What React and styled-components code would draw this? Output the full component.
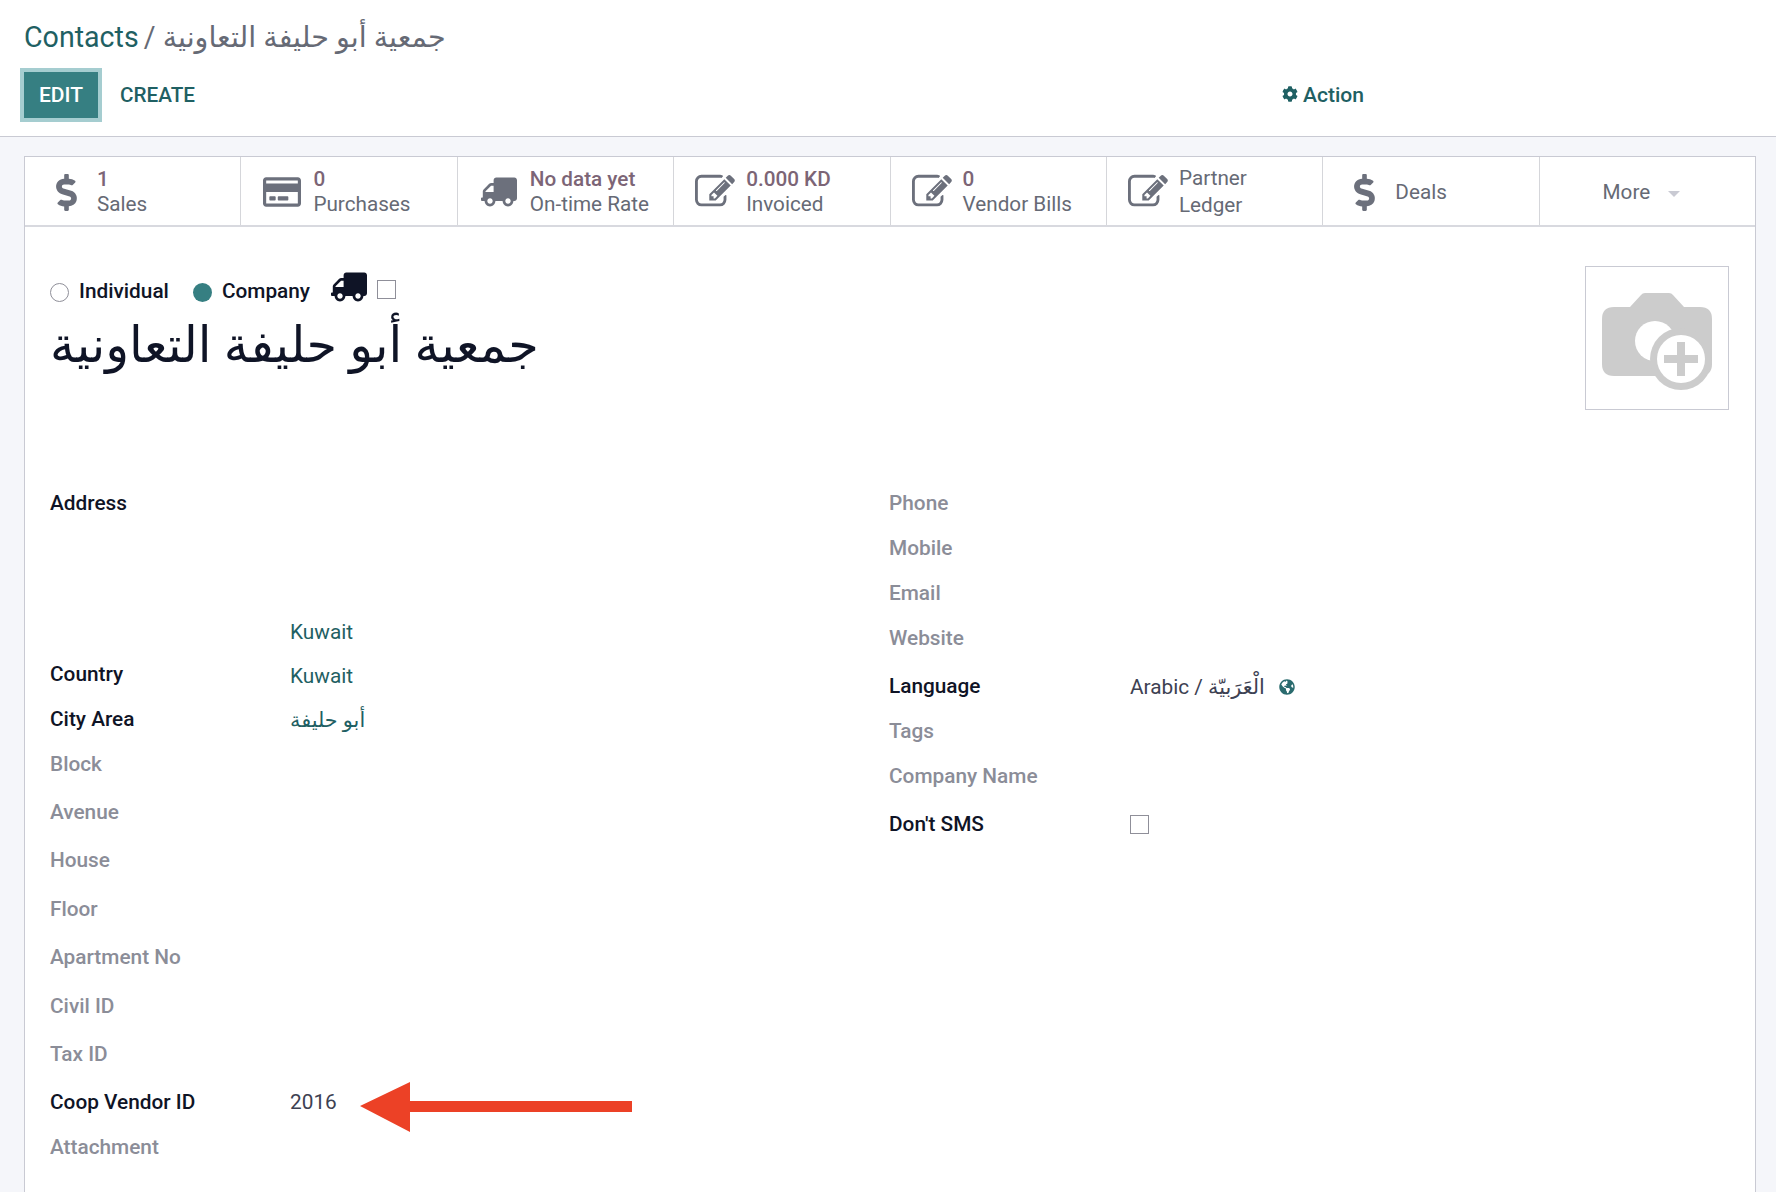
import React from "react";
import styled, { createGlobalStyle } from "styled-components";
import { FaCog, FaDollarSign, FaRegCreditCard, FaTruck, FaGlobeAmericas } from "react-icons/fa";

const Global = createGlobalStyle`
  html, body { margin: 0; padding: 0; height: 100%; overflow: hidden; background: #f5f6fa; }
  body { font-family: Roboto, "DejaVu Sans", sans-serif; color: #0f1426; }
`;

const Page = styled.div`
  position: relative;
  width: 1776px;
  height: 1192px;
  overflow: hidden;
`;

const ControlPanel = styled.header`
  height: 137px;
  box-sizing: border-box;
  background: #fff;
  border-bottom: 1px solid #c9cad3;
  padding: 18px 20px 0;
`;

const Breadcrumb = styled.div`
  font-size: 28.6px;
  line-height: 38px;
  padding-left: 4px;
  color: #666a75;
  white-space: nowrap;
`;

const CrumbLink = styled.span`
  color: #1f6063;
  margin-right: -2px;
`;

const Toolbar = styled.div`
  display: flex;
  align-items: center;
  margin-top: 12px;
  height: 54px;
`;

const EditButton = styled.button`
  width: 82px;
  height: 54px;
  box-sizing: border-box;
  background: #367f82;
  border: 4px solid #a5cdd0;
  color: #fff;
  font: 500 21px Roboto, sans-serif;
  padding: 0;
`;

const TextButton = styled.span`
  margin-left: 18px;
  font-size: 20.7px;
  font-weight: 500;
  color: #1f6063;
`;

const ActionMenu = styled.span`
  display: flex;
  align-items: center;
  gap: 5px;
  margin-left: 1087px;
  margin-top: -2px;
  font-size: 21.1px;
  font-weight: 500;
  color: #1f6063;
`;

const Sheet = styled.main`
  margin: 19px 20px 0 24px;
  height: 1100px;
  background: #fff;
  border: 1px solid #c9cad3;
  border-bottom: 0;
  box-sizing: border-box;
`;

const StatBar = styled.div`
  display: flex;
  height: 70px;
  box-sizing: border-box;
  border-bottom: 2px solid #d8d9df;
`;

const StatButton = styled.div`
  flex: ${p => (p.$last ? "1" : "0 0 216.4px")};
  box-sizing: border-box;
  display: flex;
  align-items: center;
  justify-content: ${p => (p.$last ? "center" : "flex-start")};
  padding-top: 2px;
  padding-right: ${p => (p.$last ? "12px" : "0")};
  border-right: ${p => (p.$last ? "0" : "1px solid #d5d6da")};
  color: #666a75;
  font-size: 20.7px;
  line-height: 25px;
`;

const StatIcon = styled.span`
  flex: 0 0 72px;
  box-sizing: border-box;
  display: flex;
  justify-content: center;
  padding-left: 10px;
  color: #6c707c;
  svg { display: block; }
`;

const StatText = styled.div`
  display: flex;
  flex-direction: column;
  white-space: nowrap;
`;

const StatLine = styled.span`
  line-height: 27px;
`;

const StatValue = styled.span`
  color: #7c6576;
  font-weight: 500;
`;

const Caret = styled.span`
  width: 0;
  height: 0;
  margin-left: 18px;
  margin-top: 3px;
  border-left: 6px solid transparent;
  border-right: 6px solid transparent;
  border-top: 6px solid #c9cad3;
`;

const SheetBody = styled.div`
  padding: 39px 26px 0 25px;
`;

const TitleBlock = styled.div`
  display: flex;
  justify-content: space-between;
  align-items: flex-start;
`;

const TitleLeft = styled.div`
  padding-top: 7px;
`;

const TypeRow = styled.div`
  display: flex;
  align-items: center;
  height: 36px;
  font-size: 20.8px;
  font-weight: 500;
`;

const Radio = styled.span`
  width: 19px;
  height: 19px;
  box-sizing: border-box;
  border-radius: 50%;
  margin-right: 10px;
  margin-top: 2px;
  border: ${p => (p.$on ? "0" : "1px solid #8f8f99")};
  background: ${p => (p.$on ? "#367f82" : "#fff")};
`;

const TypeLabel = styled.span`
  margin-right: ${p => p.$gap}px;
`;

const Check = styled.span`
  display: block;
  width: 19px;
  height: 19px;
  box-sizing: border-box;
  border: 1px solid #8f8f99;
  background: #fff;
  margin-top: ${p => (p.$lift ? "-4px" : "0")};
`;

const TruckMark = styled.span`
  display: flex;
  margin-right: 10px;
  margin-top: -8px;
  transform: scaleX(-1);
`;

const Title = styled.h1`
  margin: 6px 0 0;
  font-size: 49.4px;
  font-weight: 400;
  line-height: 60px;
  color: #0f1426;
`;

const ImageBox = styled.div`
  width: 144px;
  height: 144px;
  box-sizing: border-box;
  border: 1px solid #c9cad3;
  display: flex;
  align-items: center;
  justify-content: center;
  padding-top: 7px;
`;

const Groups = styled.div`
  display: grid;
  grid-template-columns: 839px 1fr;
  margin-top: 80px;
`;

const Group = styled.div`
  display: flex;
  flex-direction: column;
  --label-width: ${p => p.$labelWidth}px;
`;

const Row = styled.div`
  display: grid;
  grid-template-columns: var(--label-width) 1fr;
  grid-template-rows: 26px;
  align-items: center;
  height: 26px;
  margin-top: ${p => p.$gap || 0}px;
  font-size: 20.8px;
`;

const Label = styled.span`
  font-weight: 500;
  color: ${p => (p.$muted ? "#8b8d98" : "#0f1426")};
  white-space: nowrap;
`;

const Value = styled.span`
  color: ${p => (p.$link ? "#1f6063" : "#3d4152")};
  display: flex;
  align-items: center;
  white-space: nowrap;
  margin-top: ${p => p.$nudge || 0}px;
`;

const Globe = styled.span`
  display: flex;
  margin-left: 14px;
  color: #2a6b6e;
`;

const Arrow = styled.svg`
  position: absolute;
  left: 360px;
  top: 1082px;
`;

const PencilSquare = ({ size }) => (
  <svg width={size} height={size} viewBox="0 0 1792 1792" fill="currentColor">
    <path d="M888 1184l116-116-152-152-116 116v56h96v96h56zm440-720q-16-16-33 1l-350 350q-17 17-1 33t33-1l350-350q17-17 1-33zm80 594v190q0 119-84.500 203.500t-203.500 84.500h-832q-119 0-203.500-84.500t-84.500-203.500v-832q0-119 84.500-203.500t203.500-84.500h832q63 0 117 25 15 7 18 23 3 17-9 29l-49 49q-14 14-32 8-23-6-45-6h-832q-66 0-113 47t-47 113v832q0 66 47 113t113 47h832q66 0 113-47t47-113v-126q0-13 9-22l64-64q15-15 35-7t20 29zm-96-738l288 288-672 672h-288v-288zm444 132l-92 92-288-288 92-92q28-28 68-28t68 28l152 152q28 28 28 68t-28 68z" />
  </svg>
);

const stats = [
  { icon: <FaDollarSign size={37} />, value: "1", label: "Sales" },
  { icon: <FaRegCreditCard size={38} />, value: "0", label: "Purchases" },
  { icon: <FaTruck size={36} style={{ transform: "scaleX(-1)" }} />, value: "No data yet", label: "On-time Rate" },
  { icon: <PencilSquare size={40} />, value: "0.000 KD", label: "Invoiced" },
  { icon: <PencilSquare size={40} />, value: "0", label: "Vendor Bills" },
  { icon: <PencilSquare size={40} />, lines: ["Partner", "Ledger"] },
  { icon: <FaDollarSign size={37} />, lines: ["Deals"] },
];

const leftRows = [
  { label: "Address", strong: true, pitch: 0 },
  { value: "Kuwait", link: true, pitch: 129 },
  { label: "Country", strong: true, value: "Kuwait", link: true, nudge: 4, pitch: 42 },
  { label: "City Area", strong: true, value: "أبو حليفة", link: true, nudge: 2, pitch: 45 },
  { label: "Block", pitch: 45 },
  { label: "Avenue", pitch: 48 },
  { label: "House", pitch: 48 },
  { label: "Floor", pitch: 49 },
  { label: "Apartment No", pitch: 48 },
  { label: "Civil ID", pitch: 49 },
  { label: "Tax ID", pitch: 48 },
  { label: "Coop Vendor ID", strong: true, value: "2016", pitch: 48 },
  { label: "Attachment", pitch: 45 },
];

const rightRows = [
  { label: "Phone", pitch: 0 },
  { label: "Mobile", pitch: 45 },
  { label: "Email", pitch: 45 },
  { label: "Website", pitch: 45 },
  { label: "Language", strong: true, lang: true, nudge: 2, pitch: 48 },
  { label: "Tags", pitch: 45 },
  { label: "Company Name", pitch: 45 },
  { label: "Don't SMS", strong: true, check: true, pitch: 48 },
];

function renderRow(r, i) {
  return (
    <Row key={i} $gap={r.pitch ? r.pitch - 26 : 0}>
      <Label $muted={!r.strong}>{r.label}</Label>
      {r.lang ? (
        <Value $nudge={r.nudge}>
          Arabic / الْعَرَبيّة
          <Globe><FaGlobeAmericas size={16} /></Globe>
        </Value>
      ) : r.check ? (
        <Check />
      ) : (
        <Value $link={r.link} $nudge={r.nudge}>{r.value}</Value>
      )}
    </Row>
  );
}

function CameraPlus() {
  return (
    <svg width="110" height="97" viewBox="0 0 110 97">
      <path d="M12 14h16L39 2q1.500-2 4-2h24q2.500 0 4 2l11 12h16q12 0 12 12v45q0 12-12 12H12Q0 83 0 71V26q0-12 12-12z" fill="#ccc" />
      <circle cx="53" cy="48" r="20" fill="#fff" />
      <circle cx="79" cy="66" r="31" fill="#ccc" />
      <circle cx="79" cy="66" r="24" fill="#fff" />
      <path d="M75 49h8v13h13v8H83v13h-8V70H62v-8h13z" fill="#ccc" />
    </svg>
  );
}

export default function App() {
  return (
    <Page>
      <Global />
      <ControlPanel>
        <Breadcrumb><CrumbLink>Contacts</CrumbLink> / جمعية أبو حليفة التعاونية</Breadcrumb>
        <Toolbar>
          <EditButton>EDIT</EditButton>
          <TextButton>CREATE</TextButton>
          <ActionMenu><FaCog size={16} />Action</ActionMenu>
        </Toolbar>
      </ControlPanel>
      <Sheet>
        <StatBar>
          {stats.map((s, i) => (
            <StatButton key={i}>
              <StatIcon>{s.icon}</StatIcon>
              <StatText>
                {s.lines
                  ? s.lines.map(l => <StatLine key={l}>{l}</StatLine>)
                  : (<><StatValue>{s.value}</StatValue><span>{s.label}</span></>)}
              </StatText>
            </StatButton>
          ))}
          <StatButton $last>More<Caret /></StatButton>
        </StatBar>
        <SheetBody>
          <TitleBlock>
            <TitleLeft>
              <TypeRow>
                <Radio />
                <TypeLabel $gap={24}>Individual</TypeLabel>
                <Radio $on />
                <TypeLabel $gap={21}>Company</TypeLabel>
                <TruckMark><FaTruck size={36} /></TruckMark>
                <Check $lift />
              </TypeRow>
              <Title>جمعية أبو حليفة التعاونية</Title>
            </TitleLeft>
            <ImageBox><CameraPlus /></ImageBox>
          </TitleBlock>
          <Groups>
            <Group $labelWidth={240}>{leftRows.map(renderRow)}</Group>
            <Group $labelWidth={241}>{rightRows.map(renderRow)}</Group>
          </Groups>
        </SheetBody>
      </Sheet>
      <Arrow width="272" height="50" viewBox="0 0 272 50">
        <path d="M0 24 50 0v19h222v11H50v20z" fill="#ec4126" />
      </Arrow>
    </Page>
  );
}
